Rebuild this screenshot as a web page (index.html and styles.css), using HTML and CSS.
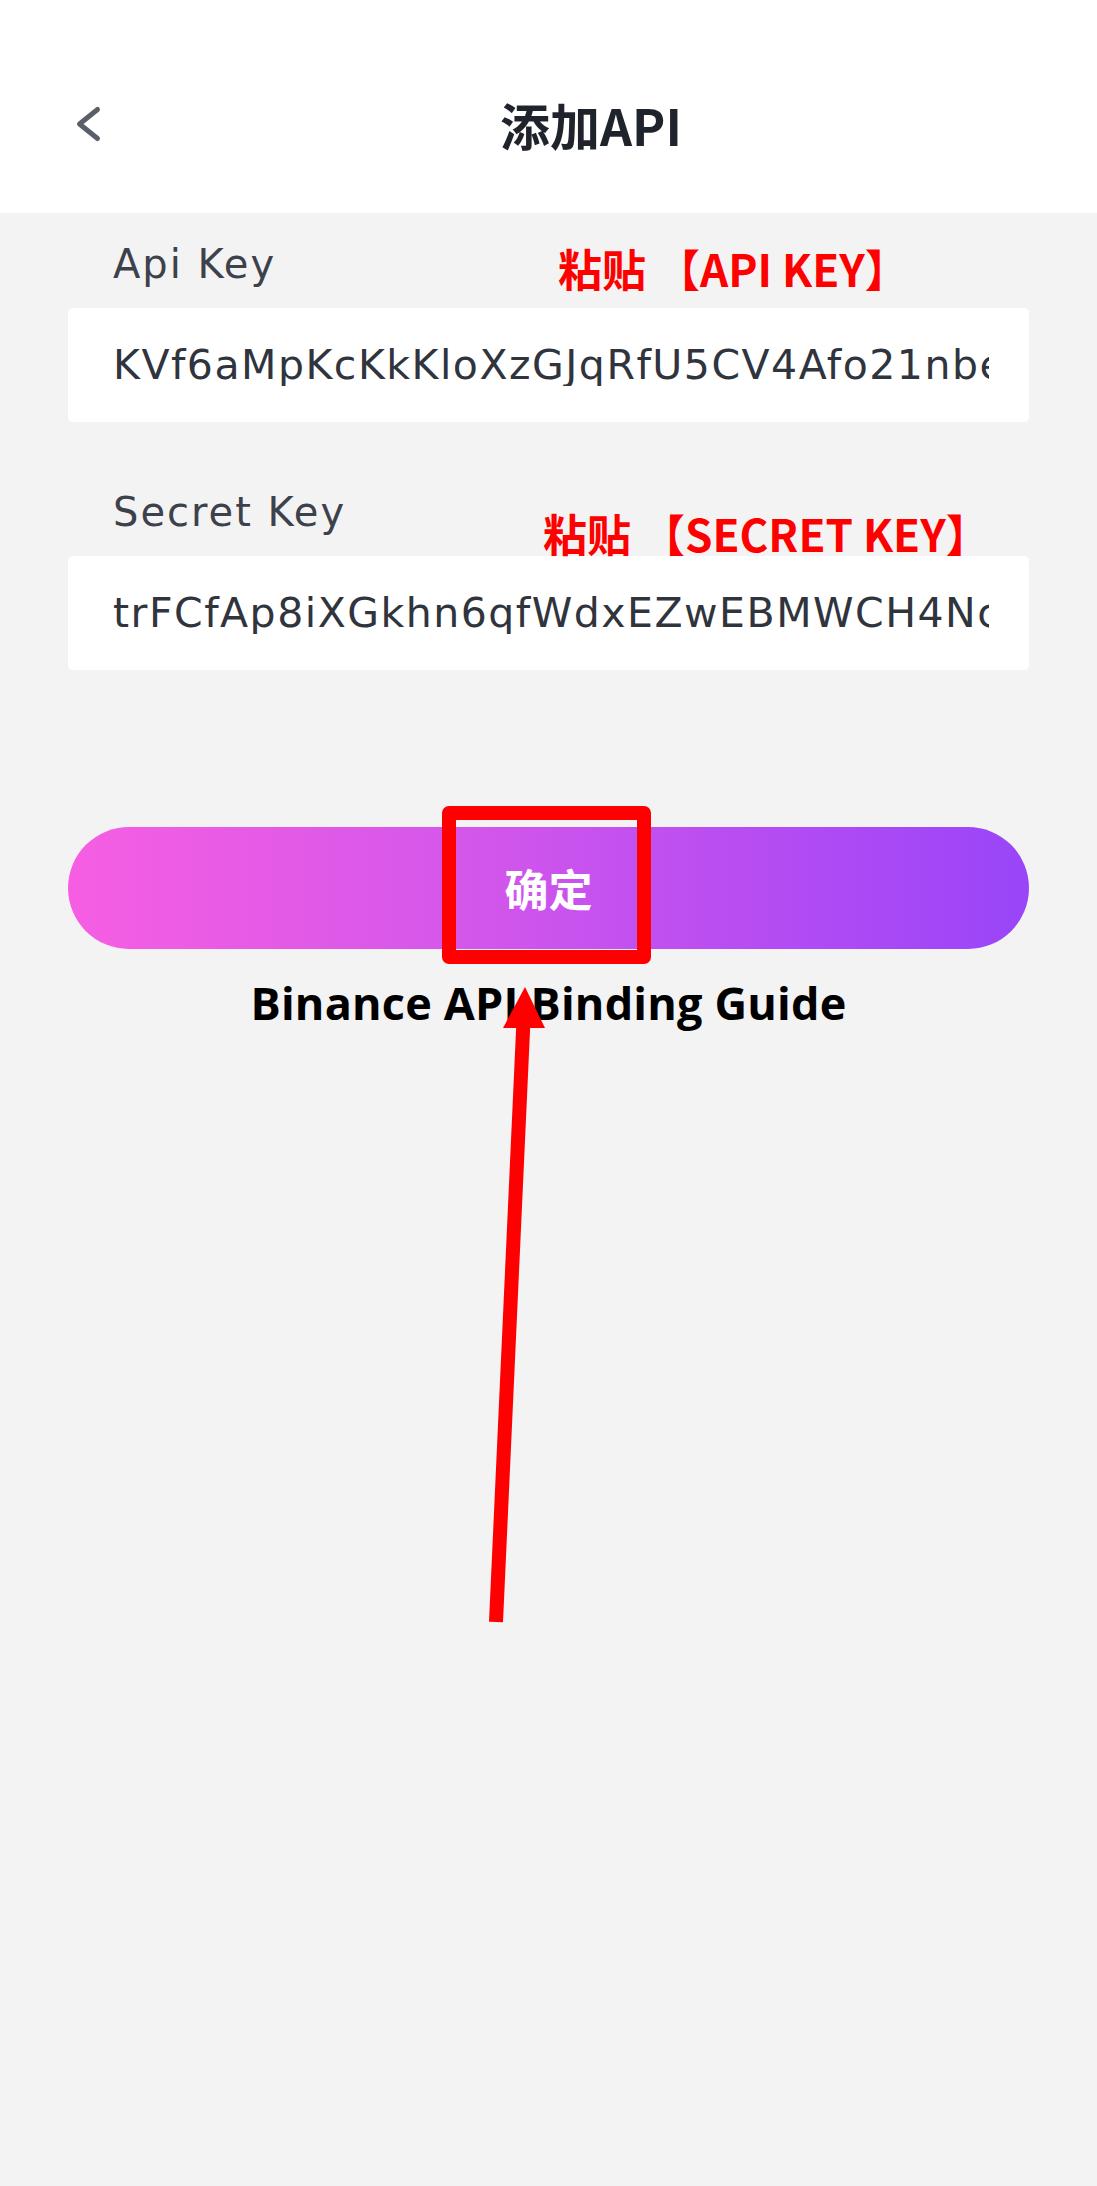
FILE: index.html
```html
<!DOCTYPE html>
<html lang="zh-CN">
<head>
<meta charset="utf-8">
<title>添加API</title>
<link rel="stylesheet" href="styles.css">
</head>
<body>
<div class="page">
  <header class="topbar">
    <svg class="back" width="32" height="42" viewBox="0 0 32 42" aria-hidden="true">
      <polyline points="25.5,6.5 7.5,21 25.5,35.5" fill="none" stroke="#5b5f6a" stroke-width="5" stroke-linecap="round" stroke-linejoin="round"/>
    </svg>
    <h1 class="title">添加API</h1>
  </header>

  <main class="form">
    <div class="label label-first">Api Key</div>
    <div class="field"><span class="field-text">KVf6aMpKcKkKloXzGJqRfU5CV4Afo21nbeQx</span></div>

    <div class="label label-next">Secret Key</div>
    <div class="field"><span class="field-text">trFCfAp8iXGkhn6qfWdxEZwEBMWCH4NcTr</span></div>

    <div class="btn-wrap">
      <button class="confirm">确定</button>
      <div class="highlight"></div>
    </div>

    <div class="guide">Binance API Binding Guide</div>
  </main>

  <div class="note note-api">粘贴 【API KEY】</div>
  <div class="note note-secret">粘贴 【SECRET KEY】</div>

  <svg class="arrow" width="80" height="650" viewBox="0 0 80 650" aria-hidden="true">
    <line x1="16" y1="642" x2="43.5" y2="40" stroke="#ff0000" stroke-width="14"/>
    <polygon points="45,7 23,48 65,48" fill="#ff0000"/>
  </svg>
</div>
</body>
</html>
```

FILE: styles.css
```css
* { box-sizing: border-box; }

html, body {
  margin: 0;
  padding: 0;
  background: #f3f3f3;
}

.page {
  position: relative;
  min-height: 2186px;
  background: #f3f3f3;
  font-family: "DejaVu Sans", "Noto Sans CJK SC", sans-serif;
}

.topbar {
  height: 213px;
  background: #ffffff;
  display: flex;
  align-items: center;
  padding-top: 34px;
  padding-left: 72px;
}

.back {
  display: block;
  flex: none;
}

.title {
  margin: 0 0 0 396px;
  font-family: "Noto Sans CJK SC", sans-serif;
  font-weight: 700;
  font-size: 50px;
  line-height: 1;
  color: #1f232b;
}

.form {
  display: flex;
  flex-direction: column;
  padding: 0 68px;
}

.label {
  font-family: "DejaVu Sans", sans-serif;
  font-size: 40px;
  line-height: 40px;
  letter-spacing: 2px;
  color: #3d414b;
  padding-left: 45px;
  margin-bottom: 24px;
}

.label-first { margin-top: 31px; }
.label-next { margin-top: 70px; }

.field {
  height: 114px;
  background: #ffffff;
  border-radius: 5px;
  display: flex;
  align-items: center;
  padding: 0 40px 0 45px;
  overflow: hidden;
}

.field-text {
  display: block;
  white-space: nowrap;
  overflow: hidden;
  width: 100%;
  font-family: "DejaVu Sans", sans-serif;
  font-size: 41px;
  line-height: 41px;
  letter-spacing: 1.5px;
  color: #30343d;
}

.btn-wrap {
  position: relative;
  margin-top: 157px;
}

.confirm {
  display: block;
  width: 100%;
  height: 122px;
  border: 0;
  border-radius: 61px;
  background: linear-gradient(90deg, #f65ee2 0%, #d557ea 40%, #b84df2 70%, #9945f9 100%);
  color: #ffffff;
  font-family: "Noto Sans CJK SC", sans-serif;
  font-weight: 700;
  font-size: 44px;
  line-height: 1;
  padding: 0;
}

.highlight {
  position: absolute;
  left: 374px;
  top: -21px;
  width: 209px;
  height: 158px;
  border: 14px solid #ff0000;
  border-radius: 7px;
}

.guide {
  margin-top: 31px;
  text-align: center;
  font-family: "Open Sans", sans-serif;
  font-weight: 700;
  font-size: 45px;
  line-height: 45px;
  letter-spacing: 0.2px;
  color: #000000;
}

.note {
  position: absolute;
  font-family: "Noto Sans CJK SC", sans-serif;
  font-weight: 700;
  font-size: 44px;
  line-height: 44px;
  color: #ff0000;
  white-space: pre;
}

.note-api { left: 558px; top: 246px; }
.note-secret { left: 543px; top: 511px; }

.arrow {
  position: absolute;
  left: 480px;
  top: 980px;
}
```
